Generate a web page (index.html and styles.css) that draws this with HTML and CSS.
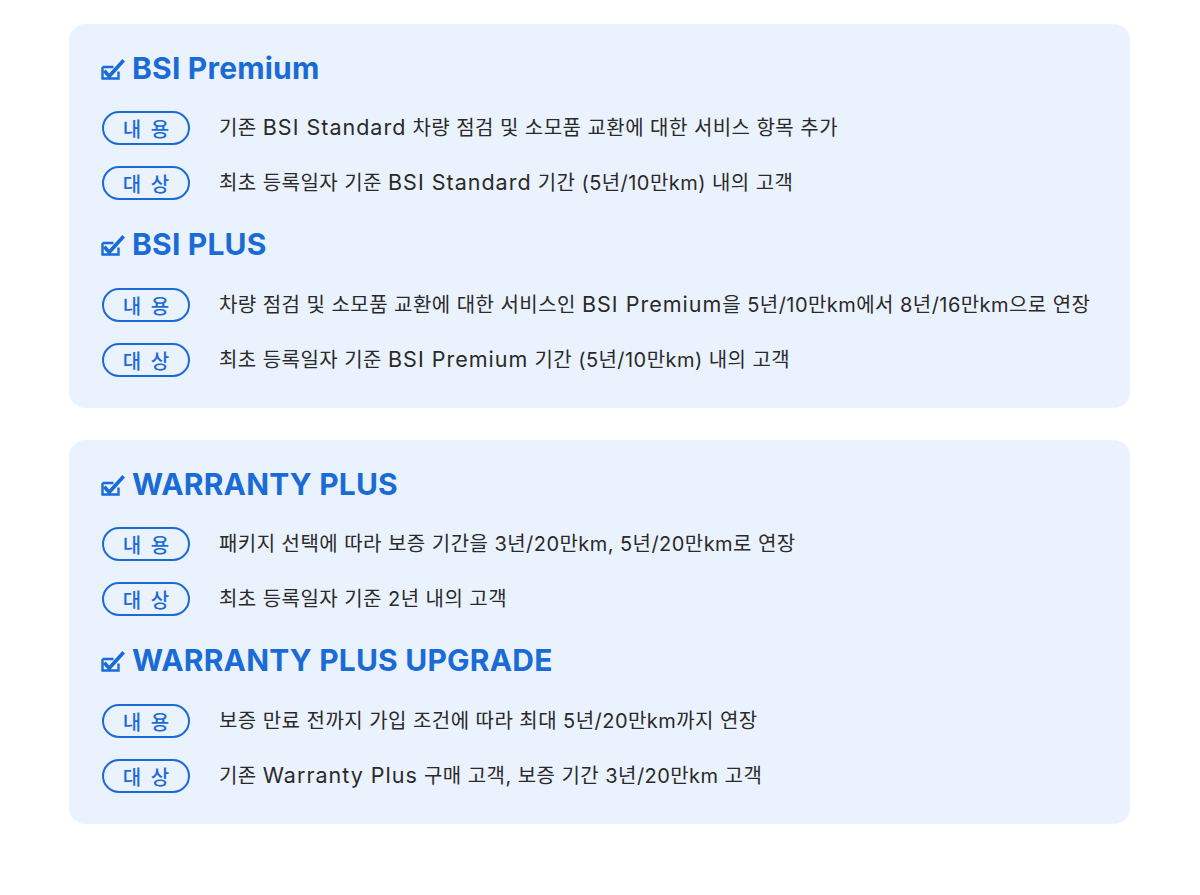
FILE: index.html
```html
<!DOCTYPE html>
<html lang="ko">
<head>
<meta charset="utf-8">
<link rel="stylesheet" href="styles.css">
</head>
<body>
<div class="page">
  <section class="card">
    <div class="group">
      <h2 class="title"><svg class="chk" viewBox="0 0 24 22"><path d="M1.5 9h11M1.5 9v11.5h16v-7" fill="none" stroke="#1b6bd6" stroke-width="2.4"/><path d="M2 14l2.6-2.6 3.6 4L21.4 1 24 3.4 8.2 21z" fill="#1b6bd6"/></svg>BSI Premium</h2>
      <div class="row"><span class="pill">내 용</span><p class="desc">기존 <span class="en">BSI Standard</span> 차량 점검 및 소모품 교환에 대한 서비스 항목 추가</p></div>
      <div class="row"><span class="pill">대 상</span><p class="desc">최초 등록일자 기준 <span class="en">BSI Standard</span> 기간 (5년/10만km) 내의 고객</p></div>
    </div>
    <div class="group">
      <h2 class="title"><svg class="chk" viewBox="0 0 24 22"><path d="M1.5 9h11M1.5 9v11.5h16v-7" fill="none" stroke="#1b6bd6" stroke-width="2.4"/><path d="M2 14l2.6-2.6 3.6 4L21.4 1 24 3.4 8.2 21z" fill="#1b6bd6"/></svg>BSI PLUS</h2>
      <div class="row"><span class="pill">내 용</span><p class="desc">차량 점검 및 소모품 교환에 대한 서비스인 <span class="en">BSI Premium</span>을 5년/10만km에서 8년/16만km으로 연장</p></div>
      <div class="row"><span class="pill">대 상</span><p class="desc">최초 등록일자 기준 <span class="en">BSI Premium</span> 기간 (5년/10만km) 내의 고객</p></div>
    </div>
  </section>
  <section class="card">
    <div class="group">
      <h2 class="title"><svg class="chk" viewBox="0 0 24 22"><path d="M1.5 9h11M1.5 9v11.5h16v-7" fill="none" stroke="#1b6bd6" stroke-width="2.4"/><path d="M2 14l2.6-2.6 3.6 4L21.4 1 24 3.4 8.2 21z" fill="#1b6bd6"/></svg>WARRANTY PLUS</h2>
      <div class="row"><span class="pill">내 용</span><p class="desc">패키지 선택에 따라 보증 기간을 3년/20만km, 5년/20만km로 연장</p></div>
      <div class="row"><span class="pill">대 상</span><p class="desc">최초 등록일자 기준 2년 내의 고객</p></div>
    </div>
    <div class="group">
      <h2 class="title"><svg class="chk" viewBox="0 0 24 22"><path d="M1.5 9h11M1.5 9v11.5h16v-7" fill="none" stroke="#1b6bd6" stroke-width="2.4"/><path d="M2 14l2.6-2.6 3.6 4L21.4 1 24 3.4 8.2 21z" fill="#1b6bd6"/></svg>WARRANTY PLUS UPGRADE</h2>
      <div class="row"><span class="pill">내 용</span><p class="desc">보증 만료 전까지 가입 조건에 따라 최대 5년/20만km까지 연장</p></div>
      <div class="row"><span class="pill">대 상</span><p class="desc">기존 <span class="en">Warranty Plus</span> 구매 고객, 보증 기간 3년/20만km 고객</p></div>
    </div>
  </section>
</div>
</body>
</html>
```

FILE: styles.css
```css
* { box-sizing: border-box; }
html, body { margin: 0; padding: 0; background: #ffffff; }
body {
  font-family: "Noto Sans CJK KR", "Noto Sans", sans-serif;
  color: #2a2a2a;
}
.page {
  width: 1200px;
  padding: 24px 70px 0 69px;
  display: flex;
  flex-direction: column;
  gap: 32px;
}
.card {
  background: #eaf2fd;
  border-radius: 16px;
  padding: 24px 32px 31px 33px;
  display: flex;
  flex-direction: column;
  gap: 24px;
}
.group {
  display: flex;
  flex-direction: column;
  gap: 21px;
}
.group + .group .row:first-of-type { margin-top: 1px; }
.title {
  margin: 0 0 2px;
  height: 40px;
  display: flex;
  align-items: center;
  gap: 7px;
  font-family: "Inter", "Noto Sans", sans-serif;
  font-size: 30px;
  font-weight: 700;
  color: #1b6bd6;
  letter-spacing: 0.2px;
}
.chk { width: 24px; height: 22px; flex: none; margin-left: -1px; margin-top: 1px; }
.row {
  display: flex;
  align-items: center;
  height: 34px;
}
.pill {
  flex: none;
  width: 88px;
  height: 34px;
  border: 2px solid #1b6bd6;
  border-radius: 17px;
  display: flex;
  align-items: center;
  justify-content: center;
  font-size: 20px;
  font-weight: 500;
  color: #1b6bd6;
  letter-spacing: 2px;
  padding-left: 2px;
}
.desc {
  margin: 0 0 0 29px;
  font-family: "Inter", "Noto Sans CJK KR", sans-serif;
  font-size: 20px;
  letter-spacing: 0.45px;
  line-height: 34px;
  white-space: nowrap;
}
.en {
  font-family: "Inter", "Noto Sans", sans-serif;
  font-size: 21.5px;
  letter-spacing: 1px;
  line-height: 1;
}
```
